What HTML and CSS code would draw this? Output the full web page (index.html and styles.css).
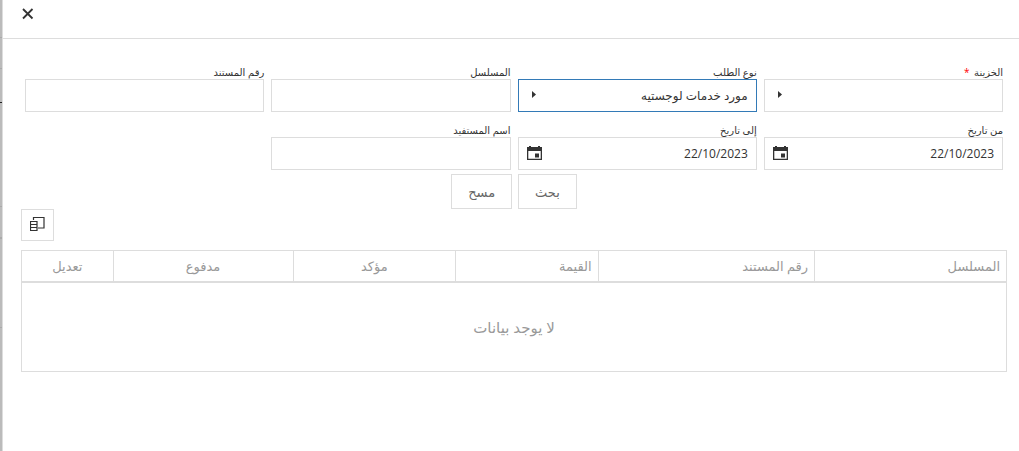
FILE: index.html
```
<!DOCTYPE html>
<html lang="ar" dir="rtl">
<head>
    <meta charset="UTF-8">
    <meta name="viewport" content="width=device-width, initial-scale=1.0">
    <title>بحث الطلبات</title>
    <link rel="stylesheet" href="styles.css">
</head>
<body>
    <main class="popup">
        <header class="popup-header">
            <button type="button" class="close-btn" aria-label="إغلاق">
                <svg width="12" height="12" viewBox="0 0 12 12"><path d="M1 1l9.500 9.500M10.500 1l-9.500 9.500" fill="none" stroke="#333" stroke-width="1.8"/></svg>
            </button>
        </header>

        <div class="popup-content">
            <form class="search-form">
                <div class="fields">
                    <div class="field">
                        <label for="treasury">الخزينة <span class="required">*</span></label>
                        <div class="control">
                            <select id="treasury">
                                <option value="" selected></option>
                            </select>
                            <svg class="arrow" width="4" height="7" viewBox="0 0 4 7"><path d="M0 0l4 3.500-4 3.500z" fill="#333"/></svg>
                        </div>
                    </div>
                    <div class="field">
                        <label for="orderType">نوع الطلب</label>
                        <div class="control">
                            <select id="orderType" class="active">
                                <option selected>مورد خدمات لوجستيه</option>
                            </select>
                            <svg class="arrow" width="4" height="7" viewBox="0 0 4 7"><path d="M0 0l4 3.500-4 3.500z" fill="#333"/></svg>
                        </div>
                    </div>
                    <div class="field">
                        <label for="serial">المسلسل</label>
                        <input type="text" id="serial">
                    </div>
                    <div class="field">
                        <label for="docNumber">رقم المستند</label>
                        <input type="text" id="docNumber">
                    </div>
                    <div class="field">
                        <label for="fromDate">من تاريخ</label>
                        <div class="control">
                            <input type="text" id="fromDate" value="22/10/2023">
                            <svg class="calendar" width="15" height="14" viewBox="0 0 15 14"><path d="M0 1h2V0h2v1h7V0h2v1h2v13H0zM1.300 5v7.700h12.400V5zM8 7.500h4v4H8z" fill="#333" fill-rule="evenodd"/></svg>
                        </div>
                    </div>
                    <div class="field">
                        <label for="toDate">إلى تاريخ</label>
                        <div class="control">
                            <input type="text" id="toDate" value="22/10/2023">
                            <svg class="calendar" width="15" height="14" viewBox="0 0 15 14"><path d="M0 1h2V0h2v1h7V0h2v1h2v13H0zM1.300 5v7.700h12.400V5zM8 7.500h4v4H8z" fill="#333" fill-rule="evenodd"/></svg>
                        </div>
                    </div>
                    <div class="field">
                        <label for="beneficiary">اسم المستفيد</label>
                        <input type="text" id="beneficiary">
                    </div>
                </div>

                <div class="actions">
                    <button type="button" class="btn">بحث</button>
                    <button type="button" class="btn">مسح</button>
                </div>
            </form>

            <div class="toolbar">
                <button type="button" class="column-btn" aria-label="اختيار الأعمدة">
                    <svg width="15" height="16" viewBox="0 0 15 16" fill="none" stroke="#333" stroke-width="1.200">
                        <path d="M3.500 3V.5h10.500v10.500H8"/>
                        <path d="M.5 4.500h6.500v9H.5zM.5 7.500h6.500M.5 10.500h6.500"/>
                    </svg>
                </button>
            </div>

            <table class="grid">
                <colgroup>
                    <col class="col-serial">
                    <col class="col-doc">
                    <col class="col-value">
                    <col class="col-confirmed">
                    <col class="col-paid">
                    <col class="col-edit">
                </colgroup>
                <thead>
                    <tr>
                        <th>المسلسل</th>
                        <th>رقم المستند</th>
                        <th>القيمة</th>
                        <th class="center">مؤكد</th>
                        <th class="center">مدفوع</th>
                        <th class="center">تعديل</th>
                    </tr>
                </thead>
                <tbody>
                    <tr>
                        <td colspan="6" class="no-data">لا يوجد بيانات</td>
                    </tr>
                </tbody>
            </table>
        </div>
    </main>
    <div class="page-behind"></div>
</body>
</html>
```

FILE: styles.css
```
* {
    box-sizing: border-box;
}
body {
    display: flex;
    min-height: 100vh;
    margin: 0;
    background-color: #fff;
    color: #333;
    font-family: "Open Sans", "Noto Sans", "DejaVu Sans", sans-serif;
    font-size: 12px;
}
button,
input,
select {
    margin: 0;
    background-color: #fff;
    border: 1px solid #ddd;
    border-radius: 0;
    color: #333;
    font-family: inherit;
    font-size: 12px;
}
svg {
    display: block;
}
.popup {
    flex: 1;
    min-width: 0;
    border-left: 1px solid #ddd;
}
/* sliver of the dimmed page left of the popup */
.page-behind {
    width: 2px;
    background: linear-gradient(
        #bbb 37px, #aaa 37px, #aaa 38px,
        #bbb 38px, #bbb 68px, #aaa 68px, #aaa 69px,
        #bbb 69px, #bbb 102px, #222 102px, #222 103px,
        #bbb 103px, #bbb 206px, #aaa 206px, #aaa 207px,
        #bbb 207px, #bbb 237px, #aaa 237px, #aaa 239px,
        #bbb 239px, #bbb 327px, #aaa 327px, #aaa 328px,
        #bbb 328px);
}
.popup-header {
    display: flex;
    justify-content: flex-end;
    height: 39px;
    padding: 4px 10px 0 15px;
    border-bottom: 1px solid #ddd;
}
.close-btn {
    display: flex;
    align-items: center;
    justify-content: center;
    width: 20px;
    height: 20px;
    padding: 0;
    border: none;
}
.popup-content {
    padding: 27px 12px 0 18px;
}
.fields {
    display: grid;
    grid-template-columns: repeat(4, 1fr);
    gap: 12px 7px;
    padding: 0 4px;
}
.field label {
    display: block;
    height: 13px;
    font-size: 10px;
    line-height: 13px;
    white-space: nowrap;
}
.required {
    margin-right: 2px;
    color: #f00;
}
.control {
    position: relative;
}
.field input,
.field select {
    display: block;
    width: 100%;
    height: 33px;
    padding: 0 8px;
    outline: none;
    appearance: none;
}
.field select.active {
    border-color: #337ab7;
}
.arrow {
    position: absolute;
    top: 12px;
    left: 14px;
    pointer-events: none;
}
.calendar {
    position: absolute;
    top: 9px;
    left: 9px;
}
.actions {
    display: flex;
    justify-content: center;
    gap: 6px;
    margin-top: 4px;
}
.btn {
    height: 35px;
    padding: 0 16px;
    color: #666;
    font-size: 13px;
}
.toolbar {
    display: flex;
    justify-content: flex-end;
}
.column-btn {
    display: flex;
    align-items: center;
    justify-content: center;
    width: 33px;
    height: 32px;
    padding: 0;
}
.grid {
    width: 100%;
    margin-top: 9px;
    border: 1px solid #ddd;
    border-collapse: separate;
    border-spacing: 0;
    color: #999;
    table-layout: fixed;
}
.col-serial {
    width: 19.5%;
}
.col-doc {
    width: 22%;
}
.col-value {
    width: 14.5%;
}
.col-confirmed {
    width: 16.5%;
}
.col-paid {
    width: 18.3%;
}
.col-edit {
    width: 9.2%;
}
.grid th {
    height: 32px;
    padding: 0 6px;
    border-bottom: 2px solid #ddd;
    border-left: 1px solid #ddd;
    font-size: 13px;
    font-weight: normal;
    text-align: right;
}
.grid th:last-child {
    border-left: none;
}
.grid th.center {
    text-align: center;
}
.grid .no-data {
    height: 88px;
    padding: 0;
    font-size: 15px;
    text-align: center;
}
```
